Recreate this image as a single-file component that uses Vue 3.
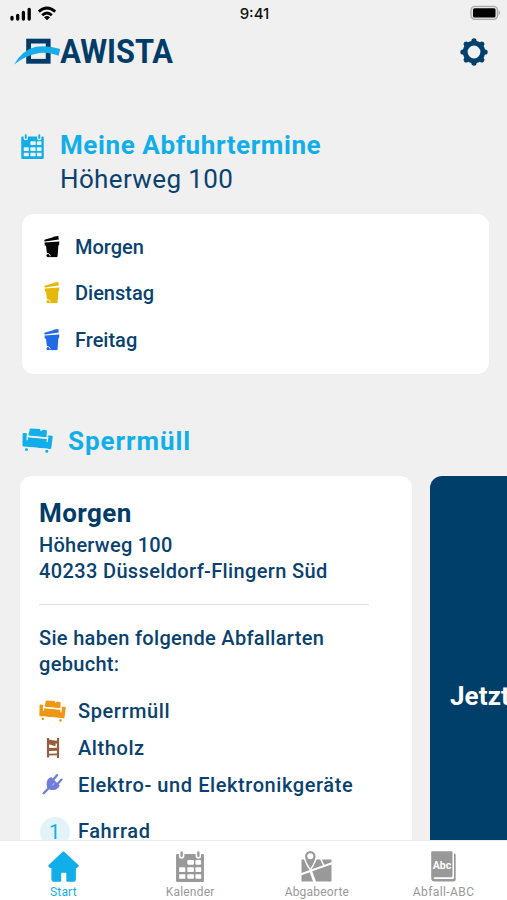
<script setup>
const pickups = [
  { day: 'Morgen', tone: 'black' },
  { day: 'Dienstag', tone: 'yellow' },
  { day: 'Freitag', tone: 'blue' },
]
const items = [
  { id: 'sofa', label: 'Sperrmüll' },
  { id: 'chair', label: 'Altholz' },
  { id: 'plug', label: 'Elektro- und Elektronikgeräte' },
]
const tabs = [
  { id: 'home', label: 'Start' },
  { id: 'calendar', label: 'Kalender' },
  { id: 'map', label: 'Abgabeorte' },
  { id: 'book', label: 'Abfall-ABC' },
]
</script>

<template>
  <div class="screen">
    <svg class="defs" aria-hidden="true">
      <symbol id="ic-calendar" viewBox="0 0 22.5 25">
        <path fill="currentColor" fill-rule="evenodd" d="M1 2.5H2.3V4a2.2 2.2 0 0 0 4.4 0V2.5H15.8V4a2.2 2.2 0 0 0 4.4 0V2.5H21.5a1 1 0 0 1 1 1V24a1 1 0 0 1-1 1H1a1 1 0 0 1-1-1V3.5a1 1 0 0 1 1-1ZM9.9 7.2a.8.8 0 0 0-.8.8v2.3c0 .4.3.7.7.7h4c.4 0 .7-.3.7-.7V8a.8.8 0 0 0-.8-.8ZM16.4 7.2a.8.8 0 0 0-.8.8v2.3c0 .4.3.7.7.7h3.200c.4 0 .7-.3.7-.7V8a.8.8 0 0 0-.8-.8ZM3 13.200a.5.5 0 0 0-.5.5v2.700c0 .3.2.5.5.5h4c.3 0 .5-.2.5-.5v-2.700a.5.5 0 0 0-.5-.5ZM9.600 13.200a.5.5 0 0 0-.5.5v2.700c0 .3.2.5.5.5H13.900c.3 0 .5-.2.5-.5v-2.700a.5.5 0 0 0-.5-.5ZM16.100 13.200a.5.5 0 0 0-.5.5v2.700c0 .3.2.5.5.5h3.700c.3 0 .5-.2.5-.5v-2.700a.5.5 0 0 0-.5-.5ZM3 18.700a.5.5 0 0 0-.5.5v2.600c0 .3.2.5.5.5h4c.3 0 .5-.2.5-.5v-2.600a.5.5 0 0 0-.5-.5ZM9.600 18.700a.5.5 0 0 0-.5.5v2.600c0 .3.2.5.5.5H13.900c.3 0 .5-.2.5-.5v-2.600a.5.5 0 0 0-.5-.5ZM16.100 18.700a.5.5 0 0 0-.5.5v2.600c0 .3.2.5.5.5h3.700c.3 0 .5-.2.5-.5v-2.600a.5.5 0 0 0-.5-.5Z" />
        <path stroke="currentColor" stroke-width="1.900" stroke-linecap="round" d="M4.500 1.100V3.900M18 1.100V3.900" />
      </symbol>
      <symbol id="ic-sofa" viewBox="0 0 31 25">
        <g fill="currentColor">
          <path d="M7.800 1.100Q8 .3 8.900.4L18 1.100 18.900 3.500 20.600 1.700 24 2.100Q25 2.300 24.900 3.200L24.500 9.300 6.400 7.600Z" />
          <path d="M1.700 5 4.200 5.200Q5.200 5.300 5.200 6.200L5.600 9.300 24.700 11.100 25.700 8.300Q25.900 7.400 26.800 7.500L29.900 7.700Q30.900 7.800 30.700 8.900L29.300 20Q29.100 21 28 20.900L1.700 18.500Q.4 18.400.4 17.300L.7 5.900Q.8 4.900 1.700 5Z" />
          <circle cx="4.500" cy="21.500" r="1.500" /><circle cx="24.800" cy="23.200" r="1.500" />
        </g>
        <path fill="none" stroke="var(--ground)" stroke-width="1.300" d="M6 8.400 24.900 10.200M5.300 6.500 5.100 12.300M25.900 8.500 25 14M3.500 19.300 26 21.400" />
      </symbol>
      <symbol id="ic-bin" viewBox="0 0 16 22">
        <g fill="currentColor">
          <path d="M.2 4.700Q.3 3.800 1.200 3.500L9 1.300Q9.600.5 10.500.4L14.200 0 14.900 1.300 13.700 1.900 15 2.500 14.800 3.400 1.100 5.500Q.2 5.500.2 4.700Z" />
          <path d="M.6 6.500 15.300 5.400 15.100 9 14.400 9.300 13.600 19.900Q13.500 21.100 12.300 21.100H6.800Q6.800 17.300 2.900 16.900L2 9.700.8 9.500Z" />
          <circle cx="4" cy="19.500" r="1.600" /><path d="M3.500 20.200H13v.9H3.500Z" />
        </g>
      </symbol>
      <symbol id="ic-chair" viewBox="0 0 14 22">
        <path fill="none" stroke="currentColor" stroke-width="2.200" d="M2 1V20.500M12 1V21" />
        <path fill="currentColor" d="M2 2.500 12 4V6.800L9.500 6.500V9.200L2 7ZM2 11.100 12 10.700V13.700L2 14ZM2 16.800 12 16.600V18.200L2 18.400Z" />
      </symbol>
      <symbol id="ic-plug" viewBox="0 0 21 21">
        <path fill="currentColor" d="M9.100 3 17.800 11.500Q15.200 16.400 11 15.900 8.400 16.300 6.200 14.900L5.200 13.800Q4.300 11.200 4.700 9 4.900 4.500 9.100 3Z" />
        <path fill="none" stroke="currentColor" stroke-width="2.300" stroke-linecap="round" d="M11 6 15 1.200M15.500 10 19.500 5.600M7.200 13.500 1.700 19.200" />
        <path stroke="#fff" stroke-width=".8" d="M10.500 11 12.300 9.300" />
      </symbol>
      <symbol id="ic-home" viewBox="0 0 31 31">
        <path fill="currentColor" stroke="currentColor" stroke-width="1.400" stroke-linejoin="round" d="M15.500.9 30.100 14.700 28.700 16.400H27.200V28.500Q27.200 30.100 25.600 30.100H19V22.200Q19 21 17.800 21H13.700Q12.500 21 12.500 22.200V30.100H5.700Q4.100 30.100 4.100 28.500V16.400H2.300L.9 14.700Z" />
      </symbol>
      <symbol id="ic-map" viewBox="0 0 31 31">
        <path fill="currentColor" d="M.5 8.500H30.500V11.200L.5 21.900ZM.5 24.300 8.700 21.300 12 30.500H.5ZM11.200 20.300 30.500 13.500V30.500H15Z" />
        <path stroke="#fff" stroke-width="1.500" d="M19.800 8 22.800 14.500" />
        <path fill="currentColor" stroke="#fff" stroke-width="3" paint-order="stroke" d="M9.300 0A5.200 5.200 0 0 1 14.500 5.200Q14.400 9.800 9.300 17.500 4.200 9.800 4.100 5.200A5.200 5.200 0 0 1 9.300 0Z" />
        <circle cx="9.300" cy="5.300" r="3" fill="#fff" />
      </symbol>
      <symbol id="ic-book" viewBox="0 0 25 31">
        <path fill="currentColor" d="M1.200.2H20.500Q21.500.2 21.500 1.200V24.800Q21.500 26.200 20 26.200H4Q2.600 26.200 2.600 27.100T4 28.100H21.700Q23 28.100 23 26.800V2.200Q24.700 2.500 24.700 4V28Q24.700 30.500 22.200 30.500H3.700Q.2 30.500.2 27V1.200Q.2.2 1.200.2Z" />
        <text class="abc" x="11" y="18" text-anchor="middle" textLength="18.500" lengthAdjust="spacingAndGlyphs">Abc</text>
      </symbol>
    </svg>

    <header class="status">
      <svg class="signal" viewBox="0 0 48 16">
        <path stroke="#000" stroke-width="3.300" stroke-linecap="round" d="M2 12.500V14M7.700 10.300V14M13.400 7.500V14M19.200 4.300V14" />
        <path fill="none" stroke="#000" stroke-width="2.800" d="M28.800 6.600Q37 -.7 45.200 6.600M32.200 10.200Q37 5.700 41.800 10.200" />
        <path d="M34 12.200Q37 9.600 40 12.200L37 15.300Z" />
      </svg>
      <span class="time">9:41</span>
      <svg class="battery" viewBox="0 0 32 16">
        <rect x="1" y="1.300" width="26.500" height="13" rx="3.800" fill="#e4e4e4" stroke="#aaa" stroke-width="1.300" />
        <rect x="3" y="3.200" width="22.500" height="9.400" rx="1.500" />
        <path d="M28.700 5Q31.400 7.700 28.700 10.500Z" fill="#aaa" />
      </svg>
    </header>

    <div class="brand">
      <svg class="logo" viewBox="0 0 160 28">
        <rect x="14.600" y="3.100" width="19.600" height="20.200" fill="none" stroke="#003c68" stroke-width="4.800" />
        <path d="M0 26.500Q9 11.500 22 8.800 33 6.800 46.200 11L44.600 17.800Q34 13.600 25.500 15 12 17 0 26.500Z" fill="#16adea" />
        <text class="logotype" x="46.300" y="25" textLength="112.700" lengthAdjust="spacingAndGlyphs">AWISTA</text>
      </svg>
      <svg class="gear" viewBox="-14 -14 28 28">
        <circle r="8.800" fill="none" stroke="currentColor" stroke-width="4.800" />
        <g stroke="currentColor" stroke-width="5.200" stroke-linecap="round">
          <path v-for="n in 8" :key="n" d="M0 -9.500V-11.100" :transform="`rotate(${n * 45})`" />
        </g>
      </svg>
    </div>

    <main class="content">
      <section class="dates">
        <svg class="cal"><use href="#ic-calendar" /></svg>
        <div>
          <h1 class="title meine">Meine Abfuhrtermine</h1>
          <p class="street">Höherweg 100</p>
        </div>
      </section>

      <ul class="card pickups">
        <li v-for="p in pickups" :key="p.day">
          <svg class="bin" :class="p.tone"><use href="#ic-bin" /></svg>
          <span>{{ p.day }}</span>
        </li>
      </ul>

      <section class="bulky">
        <svg class="sofa-title"><use href="#ic-sofa" /></svg>
        <h2 class="title sperr">Sperrmüll</h2>
      </section>

      <div class="carousel">
        <article class="card booking">
          <h3>Morgen</h3>
          <p class="address">Höherweg 100<br /><span class="city">40233 Düsseldorf-Flingern Süd</span></p>
          <hr />
          <p class="intro">Sie haben folgende Abfallarten gebucht:</p>
          <ul class="types">
            <li v-for="i in items" :key="i.id">
              <span class="slot"><svg :class="i.id"><use :href="'#ic-' + i.id" /></svg></span>
              <span>{{ i.label }}</span>
            </li>
            <li class="counted"><span class="count">1</span><span>Fahrrad</span></li>
          </ul>
        </article>
        <article class="promo">Jetzt</article>
      </div>
    </main>

    <nav class="tabs">
      <a v-for="t in tabs" :key="t.id" :class="['tab', t.id]">
        <svg><use :href="'#ic-' + t.id" /></svg>
        <span>{{ t.label }}</span>
      </a>
    </nav>
  </div>
</template>

<style>
body { margin: 0; background: #f0f0f0; }
</style>

<style scoped>
.screen { --ground: #f0f0f0; width: 507px; height: 900px; overflow: hidden; display: flex; flex-direction: column; background: #f0f0f0; color: #0a426f; font: 500 20px/26px Roboto, "Liberation Sans", sans-serif; }
.screen * { box-sizing: border-box; }
h1, h2, h3, p, ul { margin: 0; padding: 0; }
ul { list-style: none; }
svg { display: block; flex: none; overflow: visible; }
.defs { width: 0; height: 0; position: absolute; }
.status { flex: none; height: 28px; padding: 0 5px 0 10px; display: grid; grid-template-columns: 1fr auto 1fr; align-items: center; }
.signal { width: 48px; height: 16px; margin-top: -3px; }
.time { font: 500 15px/20px Inter, sans-serif; color: #111; padding-right: 3px; }
.battery { width: 32px; height: 16px; justify-self: end; margin-top: -2px; }
.brand { flex: none; height: 48px; padding: 0 19px 0 14px; display: flex; align-items: center; justify-content: space-between; }
.logo { width: 160px; height: 28px; }
.logotype { font: 700 34px Roboto, sans-serif; fill: #003c68; }
.gear { width: 28px; height: 28px; color: #00406d; }
.content { flex: 1; min-height: 0; overflow: hidden; }
.dates { display: flex; gap: 16px; padding: 53px 0 0 21px; height: 138px; }
.cal { width: 23px; height: 25px; margin-top: 5px; color: #12aeea; }
.title { font-size: 26px; line-height: 33px; font-weight: 700; color: #12aeea; }
.meine { letter-spacing: .6px; }
.street { font-size: 26px; line-height: 34px; font-weight: 400; letter-spacing: .37px; }
.card { --ground: #fff; background: #fff; border-radius: 12px; }
.pickups { width: 467px; height: 160px; margin-left: 22px; padding: 9.500px 0 0 22px; }
.pickups li { height: 46.500px; display: flex; align-items: center; gap: 15px; }
.bin { width: 16px; height: 22px; }
.black { color: #050505; }
.yellow { color: #e5b90b; }
.blue { color: #216be5; }
.bulky { height: 102px; padding: 50px 0 0 22px; display: flex; gap: 15px; }
.sofa-title { width: 31px; height: 25px; margin-top: 4px; color: #12aeea; }
.sperr { letter-spacing: .95px; line-height: 34px; }
.carousel { display: flex; gap: 18px; padding-left: 20px; height: 420px; }
.booking { flex: none; width: 392px; padding: 20px 43px 0 19px; }
.booking h3 { font-size: 26px; line-height: 34px; font-weight: 700; color: #003c68; letter-spacing: .45px; }
.address { padding-top: 2px; letter-spacing: .25px; }
.city { letter-spacing: .36px; }
hr { border: 0; height: 1px; background: #dedede; margin: 20px 0; }
.intro { letter-spacing: .31px; }
.types { padding-top: 16px; letter-spacing: .58px; }
.types li { display: flex; align-items: center; height: 36.700px; }
.slot { width: 27px; margin-right: 12px; display: flex; justify-content: center; }
.sofa { width: 27px; height: 22px; color: #ed9714; }
.chair { width: 14px; height: 22px; color: #955f3c; }
.plug { width: 21px; height: 21px; color: #707ed9; }
.types .counted { height: 55px; }
.count { width: 30px; height: 30px; margin: 2px 8px 0 1px; border-radius: 50%; background: #e3f3fa; color: #12aeea; text-align: center; line-height: 30px; font-size: 20px; font-weight: 400; }
.promo { flex: none; width: 392px; border-radius: 12px; background: #003f6a; color: #fff; font-size: 26px; font-weight: 700; line-height: 34px; padding: 203px 0 0 20px; letter-spacing: .1px; }
.tabs { flex: none; height: 60px; background: #fff; border-top: 1px solid #ececec; display: grid; grid-template-columns: repeat(4, 1fr); color: #999; }
.tab { display: flex; flex-direction: column; align-items: center; padding-top: 10px; font-size: 12px; font-weight: 400; line-height: 16px; gap: 2px; letter-spacing: .2px; }
.tab svg { width: 31px; height: 31px; }
.tab.home { color: #12aeea; }
.tab.calendar svg { width: 28px; }
.tab.book svg { width: 25px; }
.tab.book { letter-spacing: .4px; }
.abc { font: 700 11.500px Roboto, sans-serif; fill: #fff; letter-spacing: 0; }
</style>
